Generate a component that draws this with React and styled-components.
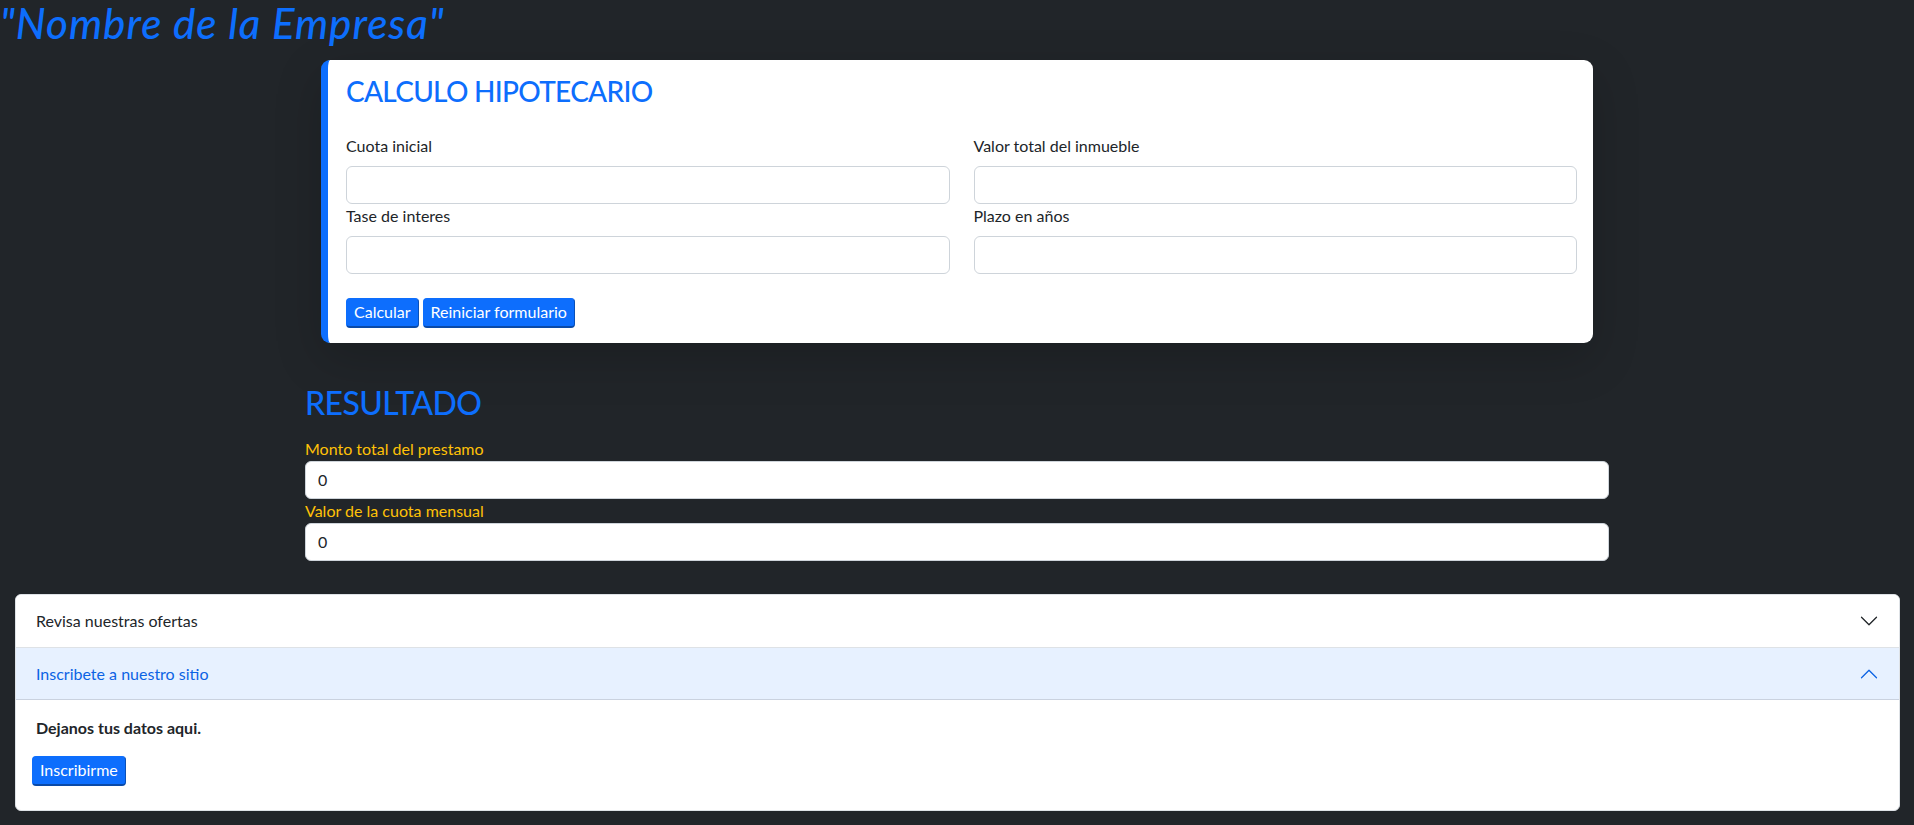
import React, {useState} from 'react';
import styled, {createGlobalStyle, css} from 'styled-components';

const GlobalStyle = createGlobalStyle`
    * {
        box-sizing: border-box;
    }
    body {
        margin: 0;
        background: #212529;
        color: #212529;
        font-family: Lato, "Segoe UI", "Noto Sans", sans-serif;
        font-size: 16px;
        line-height: 1.5;
    }
`;

const Page = styled.div`
    padding-bottom: 13px;
`;

const BrandTitle = styled.h1`
    margin: 0 0 14px;
    font-size: 42px;
    line-height: 46px;
    letter-spacing: 1px;
    font-style: italic;
    font-weight: 500;
    color: #0d6efd;
`;

const CalcCard = styled.form`
    width: 1272px;
    margin: 0 auto;
    padding: 15px 16px 15px 18px;
    background: #fff;
    border-left: 7px solid #0d6efd;
    border-radius: 9px;
    box-shadow: 0 16px 48px rgba(0, 0, 0, 0.175);
`;

const CardTitle = styled.h3`
    margin: 0 0 25px;
    font-size: 28px;
    line-height: 1.2;
    letter-spacing: -0.7px;
    font-weight: 500;
    color: #0d6efd;
`;

const FieldGrid = styled.div`
    display: grid;
    grid-template-columns: 1fr 1fr;
    column-gap: 24px;
`;

const Label = styled.label`
    display: block;
    line-height: 24px;
    margin-bottom: ${props => props.$tight ? '0' : '8px'};
    color: ${props => props.$warning ? '#ffc107' : '#212529'};
`;

const TextInput = styled.input`
    display: block;
    width: 100%;
    height: 38px;
    padding: 6px 12px;
    border: 1px solid #ced4da;
    border-radius: 6px;
    background: #fff;
    color: #212529;
    font: inherit;
    outline: none;
`;

const ButtonRow = styled.div`
    display: flex;
    gap: 4px;
    margin-top: 24px;
`;

const PrimaryButton = styled.button`
    height: 30px;
    padding: 0 7px;
    background: #0d6efd;
    color: #fff;
    font: inherit;
    line-height: 24px;
    border-style: solid;
    border-width: 1px 1px 2px 1px;
    border-color: #0d6efd #0a50b8 #0a4aa8 #0d6efd;
    border-radius: 4px;
    cursor: pointer;
    ${props => props.$shift && css`
        margin-left: -4px;
    `}
`;

const ResultSection = styled.section`
    width: 1304px;
    margin: 41px auto 0;
`;

const ResultTitle = styled.h2`
    margin: 0 0 15px;
    font-size: 32px;
    line-height: 1.2;
    letter-spacing: -0.6px;
    font-weight: 500;
    color: #0d6efd;
`;

const Accordion = styled.div`
    margin: 33px 14px 0 15px;
    background: #fff;
    border: 1px solid #dee2e6;
    border-radius: 6px;
    overflow: hidden;
`;

const AccordionItem = styled.div`
    & + & {
        border-top: 1px solid #dee2e6;
    }
`;

const AccordionHeader = styled.button`
    display: flex;
    align-items: center;
    width: 100%;
    padding: 16px 20px;
    border: 0;
    background: #fff;
    color: #212529;
    font: inherit;
    line-height: 20px;
    text-align: left;
    cursor: pointer;
    ${props => props.$open && css`
        background: #e7f1ff;
        color: #0c63e4;
        box-shadow: inset 0 -1px 0 rgba(0, 0, 0, 0.125);
    `}
`;

const Chevron = styled.svg`
    width: 20px;
    height: 20px;
    margin-left: auto;
    flex-shrink: 0;
    transform: ${props => props.$open ? 'rotate(-180deg)' : 'none'};
`;

const AccordionBody = styled.div`
    padding: 16px 20px 24px;
`;

const Lead = styled.p`
    margin: 0 0 16px;
    font-weight: 700;
`;

function Field({label, id}) {
    return (
        <div>
            <Label htmlFor={id}>{label}</Label>
            <TextInput id={id} type="text" />
        </div>
    );
}

function ChevronIcon({open}) {
    return (
        <Chevron $open={open} viewBox="0 0 16 16" fill={open ? '#0c63e4' : '#212529'}>
            <path fillRule="evenodd" d="M1.646 4.646a.5.5 0 0 1 .708 0L8 10.293l5.646-5.647a.5.5 0 0 1 .708.708l-6 6a.5.5 0 0 1-.708 0l-6-6a.5.5 0 0 1 0-.708z" />
        </Chevron>
    );
}

const sections = [
    {title: 'Revisa nuestras ofertas'},
    {title: 'Inscribete a nuestro sitio'},
];

function App() {
    const [open, setOpen] = useState(1);

    return (
        <Page>
            <GlobalStyle />
            <BrandTitle>"Nombre de la Empresa"</BrandTitle>

            <CalcCard onSubmit={e => e.preventDefault()}>
                <CardTitle>CALCULO HIPOTECARIO</CardTitle>
                <FieldGrid>
                    <Field id="cuota" label="Cuota inicial" />
                    <Field id="valor" label="Valor total del inmueble" />
                    <Field id="tasa" label="Tase de interes" />
                    <Field id="plazo" label="Plazo en años" />
                </FieldGrid>
                <ButtonRow>
                    <PrimaryButton type="submit">Calcular</PrimaryButton>
                    <PrimaryButton type="reset">Reiniciar formulario</PrimaryButton>
                </ButtonRow>
            </CalcCard>

            <ResultSection>
                <ResultTitle>RESULTADO</ResultTitle>
                <Label $warning $tight htmlFor="monto">Monto total del prestamo</Label>
                <TextInput id="monto" readOnly value="0" />
                <Label $warning $tight htmlFor="mensual">Valor de la cuota mensual</Label>
                <TextInput id="mensual" readOnly value="0" />
            </ResultSection>

            <Accordion>
                {sections.map((s, i) => (
                    <AccordionItem key={s.title}>
                        <AccordionHeader $open={open === i} onClick={() => setOpen(open === i ? -1 : i)}>
                            {s.title}
                            <ChevronIcon open={open === i} />
                        </AccordionHeader>
                        {open === i && i === 1 && (
                            <AccordionBody>
                                <Lead>Dejanos tus datos aqui.</Lead>
                                <PrimaryButton $shift>Inscribirme</PrimaryButton>
                            </AccordionBody>
                        )}
                    </AccordionItem>
                ))}
            </Accordion>
        </Page>
    );
}

export default App;
